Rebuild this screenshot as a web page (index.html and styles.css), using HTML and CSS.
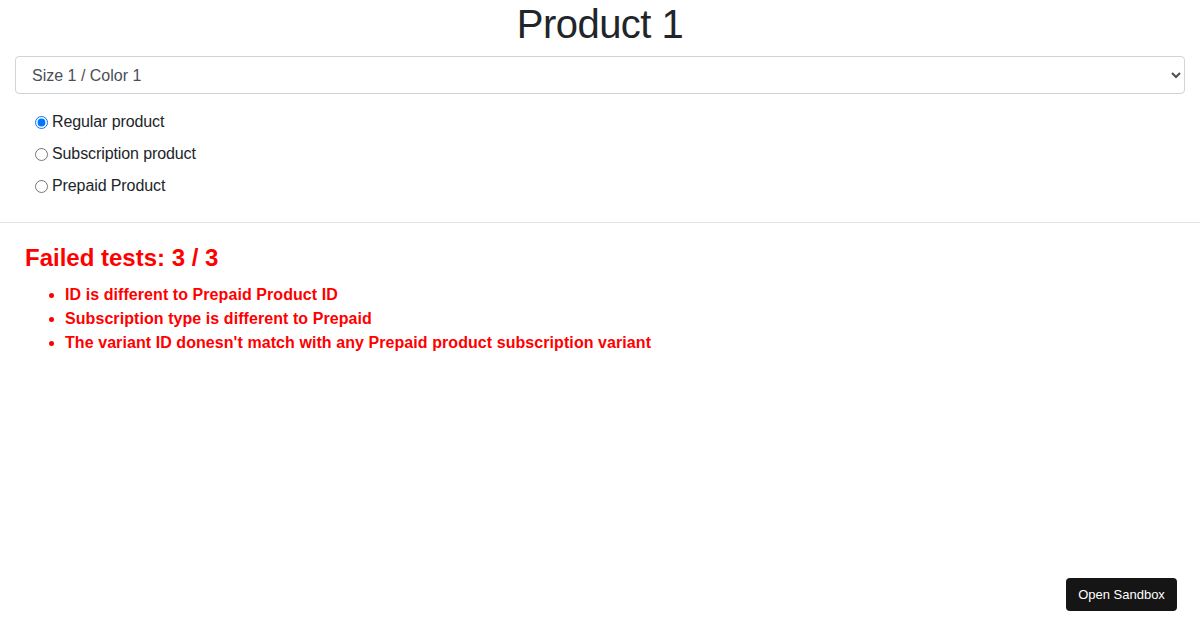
FILE: index.html
```html
<!DOCTYPE html>
<html lang="en">
<head>
<meta charset="utf-8">
<title>Product 1</title>
<link rel="stylesheet" href="styles.css">
</head>
<body>
  <div class="container">
    <h1 class="title">Product 1</h1>
    <select class="variant">
      <option>Size 1 / Color 1</option>
    </select>
    <div class="options">
      <label class="option"><input type="radio" name="type" checked> Regular product</label>
      <label class="option"><input type="radio" name="type"> Subscription product</label>
      <label class="option"><input type="radio" name="type"> Prepaid Product</label>
    </div>
  </div>
  <hr class="divider">
  <div class="results">
    <h2 class="results-title">Failed tests: 3 / 3</h2>
    <ul class="results-list">
      <li>ID is different to Prepaid Product ID</li>
      <li>Subscription type is different to Prepaid</li>
      <li>The variant ID donesn't match with any Prepaid product subscription variant</li>
    </ul>
  </div>
  <button class="sandbox-btn">Open Sandbox</button>
</body>
</html>
```

FILE: styles.css
```css
html, body {
  margin: 0;
  padding: 0;
  background: #fff;
}
body {
  font-family: "Liberation Sans", Arial, sans-serif;
  font-size: 16px;
  color: #212529;
}
.container {
  padding: 0 15px;
}
.title {
  margin: 0 0 8px;
  font-size: 40px;
  line-height: 48px;
  font-weight: 400;
  letter-spacing: -0.55px;
  text-align: center;
  color: #212529;
}
.variant {
  display: block;
  width: 100%;
  height: 38px;
  padding: 6px 12px;
  font-family: "Liberation Sans", Arial, sans-serif;
  font-size: 16px;
  color: #495057;
  background-color: #fff;
  border: 1px solid #ced4da;
  border-radius: 4px;
  box-sizing: border-box;
}
.options {
  display: flex;
  flex-direction: column;
  padding: 12px 0 0 20px;
}
.option {
  display: flex;
  align-items: center;
  height: 32px;
  font-size: 16px;
  letter-spacing: -0.1px;
  color: #212529;
}
.option input {
  margin: 0 4px 0 0;
  width: 13px;
  height: 13px;
}
.divider {
  margin: 20px 0 0;
  border: 0;
  border-top: 1px solid #e5e5e5;
  height: 0;
}
.results {
  padding: 0 25px;
  color: #ff0000;
}
.results-title {
  margin: 20px 0 0;
  font-size: 24px;
  line-height: 29px;
  font-weight: 700;
}
.results-list {
  margin: 11px 0 0;
  padding-left: 40px;
  font-weight: 700;
  line-height: 24px;
  letter-spacing: 0.07px;
}
.sandbox-btn {
  position: fixed;
  right: 23px;
  bottom: 19px;
  width: 111px;
  height: 33px;
  padding: 0;
  background: #151515;
  color: #fff;
  border: 0;
  border-radius: 4px;
  font-family: "Liberation Sans", Arial, sans-serif;
  font-size: 13px;
}
```
